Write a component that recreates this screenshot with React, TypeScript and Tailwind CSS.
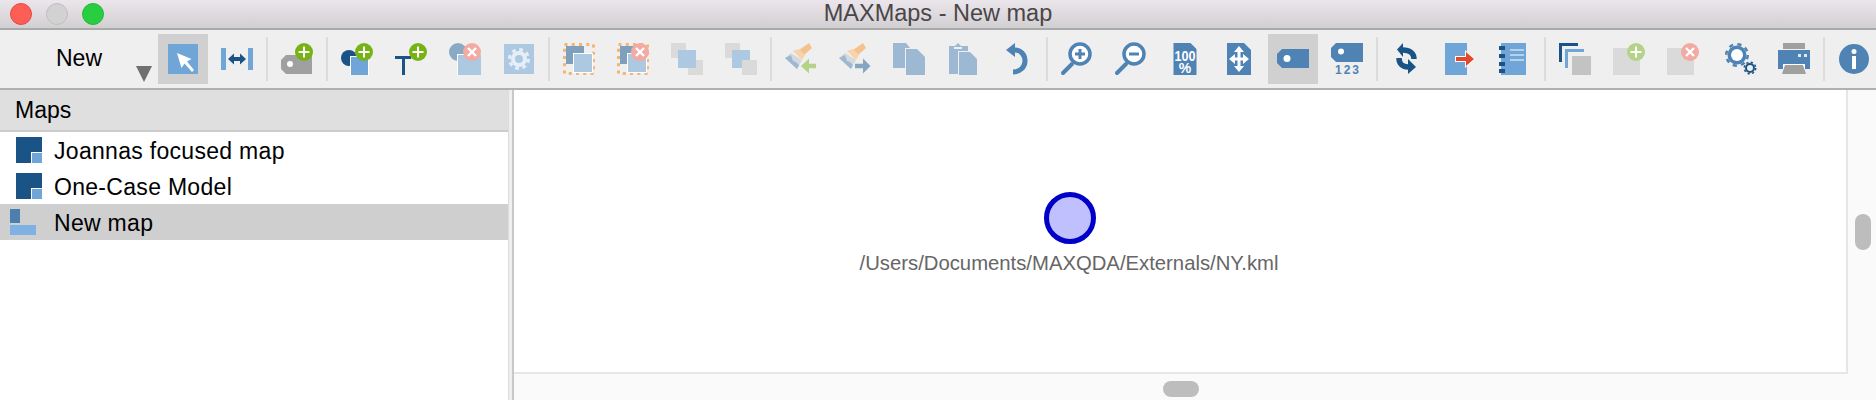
import React from 'react';

const DARK = '#1a5486';
const MID = '#6fa5d7';
const STEEL = '#4e83b4';
const LIGHT = '#adc9e2';
const PALE = '#9db8d2';
const GREY = '#a0a0a0';
const SOFT = '#dadada';
const GREEN = '#76b314';
const PINK = '#f2aaa2';
const ORANGE = '#f5b470';

const Plus = ({ x = 23, y = 9, fill = GREEN }: { x?: number; y?: number; fill?: string }) => (
  <g>
    <circle cx={x} cy={y} r={9} fill={fill} />
    <path d={`M${x - 5.5} ${y}h11M${x} ${y - 5.5}v11`} stroke="#fff" strokeWidth={2} fill="none" />
  </g>
);

const Cross = ({ x = 23, y = 9 }: { x?: number; y?: number }) => (
  <g>
    <circle cx={x} cy={y} r={9} fill={PINK} />
    <path d={`M${x - 4} ${y - 4}l8 8M${x + 4} ${y - 4}l-8 8`} stroke="#fff" strokeWidth={2.4} fill="none" />
  </g>
);

const Gear = ({ x, y, r, tooth, hole, color, holeColor }: { x: number; y: number; r: number; tooth: number; hole: number; color: string; holeColor: string }) => {
  const dash = (2 * Math.PI * (r + tooth / 2)) / 16;
  return (
    <g>
      <circle cx={x} cy={y} r={r + tooth / 2} fill="none" stroke={color} strokeWidth={tooth} strokeDasharray={`${dash} ${dash}`} />
      <circle cx={x} cy={y} r={r} fill={color} />
      <circle cx={x} cy={y} r={hole} fill={holeColor} />
    </g>
  );
};

const Dotted = () => (
  <rect x={1.5} y={1.5} width={29} height={29} fill="none" stroke={ORANGE} strokeWidth={3} strokeDasharray="3 4.25" />
);

const Brush = () => (
  <g>
    <path d="M24 0l3 5-8 7-5-5z" fill="#f5c28e" />
    <path d="M8 8l6-2 6 6-3 5z" fill="#f7d3ac" />
    <path d="M6 10l11 7-5 9L0 15z" fill="#d5d9dc" />
    <path d="M0 15l6-3 2 6 3 1 3 3-2 4z" fill={PALE} />
  </g>
);

const Magnifier = ({ sign }: { sign: React.ReactNode }) => (
  <g>
    <path d="M2 30l9-9" stroke={STEEL} strokeWidth={4} strokeLinecap="round" />
    <circle cx={19} cy={11} r={10} fill="#fff" stroke={STEEL} strokeWidth={3.5} />
    {sign}
  </g>
);

const icons: Record<string, React.ReactNode> = {
  select: (
    <g>
      <rect width={30} height={30} x={1} y={1} fill={MID} />
      <path d="M10 10l14.500 6-4.500 2.500 7 8.500-2 2-7.500-8.500-3 4.500z" fill="#fff" />
    </g>
  ),
  resize: (
    <g>
      <path d="M0 5h5v22H0zM27 5h5v22h-5z" fill={MID} />
      <path d="M7 16l6-5.500v3.500h6v-3.500l6 5.500-6 5.500V18h-6v3.500z" fill={DARK} />
    </g>
  ),
  tagAdd: (
    <g>
      <path d="M5 12h26v19H5l-5-5v-9z" fill={GREY} />
      <circle cx={9} cy={21} r={3} fill="#fff" />
      <Plus />
    </g>
  ),
  circleAdd: (
    <g>
      <circle cx={8} cy={15} r={8} fill={DARK} />
      <rect x={9} y={13} width={19} height={19} fill="#fff" />
      <rect x={10} y={14} width={17} height={18} fill={MID} />
      <Plus />
    </g>
  ),
  textAdd: (
    <g>
      <path d="M0 13h16v3H0zM7 16h3v16H7z" fill={DARK} />
      <Plus />
    </g>
  ),
  remove: (
    <g>
      <circle cx={9} cy={9} r={9} fill="#8aa9c4" />
      <rect x={8} y={11} width={24} height={21} fill="#fff" />
      <rect x={9} y={12} width={23} height={20} fill={LIGHT} />
      <Cross />
    </g>
  ),
  settings: (
    <g>
      <rect x={1} y={1} width={30} height={30} fill={LIGHT} />
      <Gear x={16} y={16} r={8} tooth={3} hole={4} color="#e6eff7" holeColor={LIGHT} />
    </g>
  ),
  group: (
    <g>
      <Dotted />
      <rect x={3} y={3} width={18} height={18} fill="#7fa0bd" />
      <rect x={10} y={10} width={20} height={20} fill="#fff" />
      <rect x={11} y={11} width={18} height={18} fill={LIGHT} />
    </g>
  ),
  ungroup: (
    <g>
      <Dotted />
      <rect x={3} y={3} width={18} height={18} fill="#7fa0bd" />
      <rect x={10} y={10} width={20} height={20} fill="#fff" />
      <rect x={11} y={11} width={18} height={18} fill={LIGHT} />
      <Cross />
    </g>
  ),
  front: (
    <g>
      <rect width={15} height={15} fill={SOFT} />
      <rect x={17} y={17} width={15} height={15} fill={SOFT} />
      <rect x={7} y={7} width={18} height={18} fill={LIGHT} />
    </g>
  ),
  back: (
    <g>
      <rect width={15} height={15} fill={SOFT} />
      <rect x={7} y={7} width={18} height={18} fill={LIGHT} />
      <rect x={17} y={17} width={15} height={15} fill={SOFT} />
    </g>
  ),
  brushIn: (
    <g>
      <Brush />
      <path d="M16 23l8-7.500v5.200h7v4.600h-7v5.200z" fill="#b3d488" />
    </g>
  ),
  brushOut: (
    <g>
      <Brush />
      <path d="M16 20.700h8v-5.200l7.500 7.500-7.500 7.500v-5.200h-8z" fill="#85a5c0" />
    </g>
  ),
  copy: (
    <g>
      <path d="M0 0h13l4 5v20H0z" fill={PALE} />
      <path d="M12 5h12l8 8v19H12z" fill="#efefef" />
      <path d="M13 6h11l8 8v18H13z" fill={PALE} />
    </g>
  ),
  paste: (
    <g>
      <path d="M2 3h6l3-3 3 3h7v28H2z" fill={PALE} />
      <path d="M7 4h8v2H7z" fill="#efefef" />
      <path d="M11 8h12l7 7v17H11z" fill="#efefef" />
      <path d="M12 9h11l7 7v16H12z" fill={PALE} />
    </g>
  ),
  undo: (
    <g>
      <path d="M14 7c6 0 10 5 10 11s-5 11-12 11" fill="none" stroke={STEEL} strokeWidth={5} />
      <path d="M5 7l9-7v14z" fill={STEEL} />
    </g>
  ),
  zoomIn: <Magnifier sign={<path d="M14 11h10M19 6v10" stroke={STEEL} strokeWidth={3} />} />,
  zoomOut: <Magnifier sign={<path d="M14 11h10" stroke={STEEL} strokeWidth={3} />} />,
  actual: (
    <g>
      <path d="M4.500 0h17l6 6v26h-23z" fill={STEEL} />
      <text x={16} y={18} textAnchor="middle" fontSize={15} fontWeight={700} textLength={21} lengthAdjust="spacingAndGlyphs" fill="#fff" fontFamily="Liberation Sans, sans-serif">100</text>
      <text x={16} y={30} textAnchor="middle" fontSize={14} fontWeight={700} fill="#fff" fontFamily="Liberation Sans, sans-serif">%</text>
    </g>
  ),
  fit: (
    <g>
      <path d="M4 0h17l7 7v25H4z" fill={STEEL} />
      <path d="M16 7v18M9 16h14" stroke="#fff" strokeWidth={3} />
      <path d="M16 3l5 6H11zM16 29l5-6H11zM6 16l6-5v10zM26 16l-6-5v10z" fill="#fff" />
    </g>
  ),
  tag: (
    <g>
      <path d="M5 6h27v19H5l-5-5v-9z" fill={STEEL} />
      <circle cx={10} cy={15.500} r={3.500} fill="#fff" />
    </g>
  ),
  tagNumber: (
    <g>
      <path d="M5 0h27v19H5l-5-5V5z" fill={STEEL} />
      <circle cx={10} cy={8.500} r={3} fill="#fff" />
      <text x={17} y={31} textAnchor="middle" fontSize={12} fontWeight={700} letterSpacing={2} fill={STEEL} fontFamily="Liberation Sans, sans-serif">123</text>
    </g>
  ),
  sync: (
    <g>
      <path d="M12 7C18 7 23 10 23 16" fill="none" stroke={DARK} strokeWidth={5.500} />
      <path d="M6 6.500L12 0v14z" fill={DARK} />
      <path d="M8 15C8 21 12 24 17 24" fill="none" stroke={DARK} strokeWidth={5.500} />
      <path d="M25 24l-8-8v15z" fill={DARK} />
    </g>
  ),
  export: (
    <g>
      <rect width={22} height={32} fill={MID} />
      <path d="M10 13h10V7l10 9-10 9v-6H10z" fill="#fff" />
      <path d="M11 14h10V9l8 7-8 7v-5H11z" fill="#e2492a" />
    </g>
  ),
  notes: (
    <g>
      <rect x={2} width={25} height={32} fill={MID} />
      <path d="M0 3h6v4H0zM0 11h6v4H0zM0 19h6v4H0zM0 26h6v4H0z" fill={DARK} />
      <path d="M11 7h14M11 12h14M11 17h14" stroke="#fff" strokeWidth={1} />
    </g>
  ),
  windows: (
    <g>
      <path d="M0 0h19v3H3v16H0z" fill={DARK} />
      <path d="M6 6h19v3H9v16H6z" fill={MID} />
      <rect x={13} y={13} width={19} height={19} fill="#c3c3c3" />
    </g>
  ),
  addBox: (
    <g>
      <rect y={5} width={27} height={27} fill={SOFT} />
      <Plus fill="#b3d488" />
    </g>
  ),
  removeBox: (
    <g>
      <rect y={5} width={27} height={27} fill={SOFT} />
      <Cross />
    </g>
  ),
  gears: (
    <g>
      <Gear x={13} y={12} r={9.500} tooth={2.500} hole={6} color={STEEL} holeColor="#fff" />
      <Gear x={26} y={25} r={5} tooth={1.500} hole={3} color={DARK} holeColor="#efefef" />
    </g>
  ),
  printer: (
    <g>
      <rect x={5} y={0} width={22} height={6} fill={GREY} />
      <path d="M0 7h32v19H0z" fill={STEEL} />
      <path d="M20 11h3v3h-3zM26 11h3v3h-3z" fill="#dce8f2" />
      <path d="M5 21h22v5H5z" fill="#fff" />
      <path d="M7 22h18l3 9H4z" fill={GREY} />
    </g>
  ),
  info: (
    <g>
      <circle cx={16} cy={16} r={15} fill={STEEL} />
      <circle cx={16} cy={8.500} r={2.500} fill="#fff" />
      <path d="M14 13h4v13h-4z" fill="#fff" />
    </g>
  ),
};

const toolbar: (string | { name: string; active: boolean } | null)[] = [
  { name: 'select', active: true },
  'resize',
  null,
  'tagAdd',
  null,
  'circleAdd',
  'textAdd',
  'remove',
  'settings',
  null,
  'group',
  'ungroup',
  'front',
  'back',
  null,
  'brushIn',
  'brushOut',
  'copy',
  'paste',
  'undo',
  null,
  'zoomIn',
  'zoomOut',
  'actual',
  'fit',
  { name: 'tag', active: true },
  'tagNumber',
  null,
  'sync',
  'export',
  'notes',
  null,
  'windows',
  'addBox',
  'removeBox',
  'spacer',
  'gears',
  'printer',
  null,
  'info',
];

const ToolButton = ({ name, active }: { name: string; active?: boolean }) => (
  <div className="w-[54px] h-[50px] flex items-center justify-center shrink-0">
    <div className={`w-[50px] h-[50px] flex items-center justify-center ${active ? 'bg-[#d0d0d0]' : ''}`}>
      <svg width="32" height="32" viewBox="0 0 32 32" className="overflow-visible">{icons[name]}</svg>
    </div>
  </div>
);

const MapIcon = () => (
  <svg width="26" height="26" viewBox="0 0 26 26" className="ml-4 shrink-0">
    <path d="M0 0h26v15H15v11H0z" fill={DARK} />
    <rect x={16} y={16} width={10} height={10} fill={MID} />
  </svg>
);

const NewMapIcon = () => (
  <svg width="26" height="26" viewBox="0 0 26 26" className="ml-2.5 shrink-0">
    <rect width={10} height={14} fill="#4a7fb0" />
    <rect y={16} width={26} height={10} fill="#7fb2e3" />
  </svg>
);

export default function App() {
  return (
    <div className="w-[1876px] h-[400px] overflow-hidden flex flex-col bg-white font-['Liberation_Sans',sans-serif] text-black">
      <div className="relative h-[30px] flex items-center justify-center bg-gradient-to-b from-[#ebe6eb] to-[#d2cfd2] border-b-2 border-[#a9a9a9]">
        <div className="absolute left-2.5 top-[3px] flex gap-3.5">
          <span className="w-[22px] h-[22px] rounded-full bg-[#fd5f57] border border-[#e5483f]" />
          <span className="w-[22px] h-[22px] rounded-full bg-[#d2d2d2] border border-[#c0c0c0]" />
          <span className="w-[22px] h-[22px] rounded-full bg-[#28cd41] border border-[#22b838]" />
        </div>
        <span className="text-[23.5px] leading-none text-[#4a4648]">MAXMaps - New map</span>
      </div>

      <div className="h-[60px] flex items-center bg-[#efefef] border-b-2 border-[#b0b0b0]">
        <div className="relative w-[156px] h-full shrink-0">
          <span className="absolute left-[56px] top-[14px] text-[23px] leading-[28px]">New</span>
          <span className="absolute left-[136px] top-[36px] w-0 h-0 border-x-[8px] border-x-transparent border-t-[16px] border-t-[#707070]" />
        </div>
        {toolbar.map((item, i) => {
          if (item === null) return <div key={i} className="w-[6px] flex justify-center shrink-0"><div className="w-0.5 h-[44px] bg-[#dcdcdc]" /></div>;
          if (item === 'spacer') return <div key={i} className="w-[3px] shrink-0" />;
          if (typeof item === 'string') return <ToolButton key={i} name={item} />;
          return <ToolButton key={i} name={item.name} active={item.active} />;
        })}
      </div>

      <div className="flex-1 flex min-h-0">
        <div className="w-[509px] flex flex-col shrink-0 border-r border-[#dcdcdc]">
          <div className="h-[40px] flex items-center pl-[15px] bg-[#dfdfdf] border-b-2 border-[#cccccc] text-[23px] box-content">Maps</div>
          <div className="h-9 flex items-center">
            <MapIcon />
            <span className="ml-3 pt-[3px] text-[23px] tracking-[0.3px]">Joannas focused map</span>
          </div>
          <div className="h-9 flex items-center">
            <MapIcon />
            <span className="ml-3 pt-[3px] text-[23px] tracking-[0.3px]">One-Case Model</span>
          </div>
          <div className="h-9 flex items-center bg-[#cfcfcf]">
            <NewMapIcon />
            <span className="ml-[18px] pt-0.5 text-[23px] tracking-[0.3px]">New map</span>
          </div>
        </div>

        <div className="w-[3px] bg-[#efefef] shrink-0" />

        <div className="flex-1 flex flex-col min-w-0 bg-[#fafafa] border-l-2 border-[#c8c8c8]">
          <div className="flex-1 flex min-h-0">
            <div className="relative flex-1 bg-white border-r-2 border-b-2 border-[#e6e6e6]">
              <div className="absolute left-[530px] top-[102px] w-[52px] h-[52px] rounded-full bg-[#c0c0ff] border-[5px] border-[#0000c8]" />
              <span className="absolute left-[555px] top-[161px] -translate-x-1/2 whitespace-nowrap text-[20.3px] leading-6 text-[#666666]">/Users/Documents/MAXQDA/Externals/NY.kml</span>
            </div>
            <div className="w-7 shrink-0 pt-[124px] pl-[7px]">
              <div className="w-4 h-9 rounded-full bg-[#bdbdbd]" />
            </div>
          </div>
          <div className="h-[26px] shrink-0 pt-[7px] pl-[649px]">
            <div className="w-9 h-4 rounded-full bg-[#bdbdbd]" />
          </div>
        </div>
      </div>
    </div>
  );
}
